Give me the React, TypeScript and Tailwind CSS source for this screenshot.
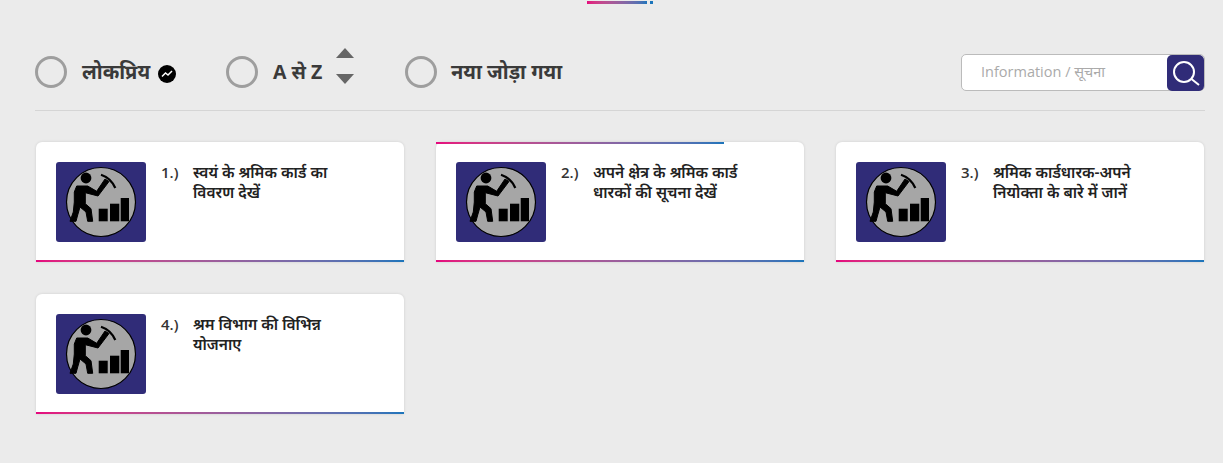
const cards = [
  { n: '1.)', lines: ['स्वयं के श्रमिक कार्ड का', 'विवरण देखें'], active: false },
  { n: '2.)', lines: ['अपने क्षेत्र के श्रमिक कार्ड', 'धारकों की सूचना देखें'], active: true },
  { n: '3.)', lines: ['श्रमिक कार्डधारक-अपने', 'नियोक्ता के बारे में जानें'], active: false },
  { n: '4.)', lines: ['श्रम विभाग की विभिन्न', 'योजनाए'], active: false },
]

// labour card logo
const WorkerIcon = () => (
  <svg viewBox="0 0 90 80" className="w-[90px] h-[80px] rounded-[3px] shrink-0 bg-[#302c78]">
    <circle cx="45" cy="40" r="34.5" fill="#a6a6a6" stroke="#000" strokeWidth="1.2" />
    <circle cx="30" cy="16" r="5.4" fill="#000" />
    <path d="M20.7 24 L31.7 24 L40.7 29.3 L49 17 L53 19.5 L42 34 L29.3 30.7 L29.3 41.7 L35 46.7 L36.7 59.3 L31.7 59.3 L30 50 L24 45 L21.7 53 L20 59.3 L14 59.3 L17.3 50 L18.3 40 L18.3 30 Z" fill="#000" stroke="#000" strokeWidth="1" strokeLinejoin="round" />
    <path d="M45 12.7 Q55 16 59.3 26" fill="none" stroke="#000" strokeWidth="2.2" />
    <rect x="42.7" y="46.7" width="9" height="12.6" fill="#000" />
    <rect x="54" y="41.7" width="9.3" height="17.6" fill="#000" />
    <rect x="64.7" y="36" width="8.3" height="23.3" fill="#000" />
  </svg>
)

const Radio = () => <span className="w-8 h-8 rounded-full border-[3px] border-[#9e9e9e] shrink-0" />

function Card({ n, lines, active }: { n: string; lines: string[]; active: boolean }) {
  return (
    <div className="relative h-[120px] bg-white rounded-t-[6px] shadow-[0_0_3px_rgba(0,0,0,0.12)] pt-5 px-5 flex">
      {active && <div className="absolute left-0 top-0 w-[288px] h-[2px] bg-gradient-to-r from-[#e5057d] to-[#1b75bb]" />}
      <WorkerIcon />
      <div className="ml-[15px] w-[32px] text-[15px] font-semibold text-[#333] leading-5">{n}</div>
      <div className="text-[15.5px] font-semibold text-[#222] leading-5">
        {lines.map(l => <div key={l}>{l}</div>)}
      </div>
      <div className="absolute left-0 bottom-0 w-full h-[2px] bg-gradient-to-r from-[#e5057d] to-[#1b75bb]" />
    </div>
  )
}

export default function App() {
  return (
    <div className="h-[463px] bg-[#ebebeb] overflow-hidden font-['Open_Sans','Noto_Sans',sans-serif]">
      <div className="flex justify-center gap-[3px] pl-[17px] pt-[1px] h-[4px]">
        <div className="w-[60px] h-[3px] bg-gradient-to-r from-[#e5057d] to-[#1b75bb]" />
        <div className="w-[3px] h-[3px] bg-[#1b75bb]" />
      </div>

      <div className="ml-[35px] mr-[18px] mt-[40px] h-[67px] border-b border-[#d5d5d5] flex items-start">
        <div className="flex items-center h-[56px] w-[191px]">
          <Radio />
          <span className="ml-[15px] text-xl font-bold text-[#3a3a3a]">लोकप्रिय</span>
          <span className="ml-[8px] mt-1 w-[18px] h-[18px] rounded-full bg-black text-white flex items-center justify-center">
            <svg viewBox="0 0 24 24" className="w-3 h-3" fill="none" stroke="currentColor" strokeWidth="3"><path d="M2 17 L9 10 L14 14 L22 6" /></svg>
          </span>
        </div>
        <div className="flex items-center h-[56px] w-[179px]">
          <Radio />
          <span className="ml-[15px] text-[19.5px] font-bold text-[#3a3a3a]">A से Z</span>
          <span className="ml-[14px] mb-[12px] flex flex-col gap-[16px]">
            <span className="w-0 h-0 border-x-[9px] border-x-transparent border-b-[10px] border-b-[#666]" />
            <span className="w-0 h-0 border-x-[9px] border-x-transparent border-t-[10px] border-t-[#666]" />
          </span>
        </div>
        <div className="flex items-center h-[56px]">
          <Radio />
          <span className="ml-[14px] text-xl font-bold text-[#3a3a3a]">नया जोड़ा गया</span>
        </div>
        <div className="ml-auto mt-[10px] w-[244px] h-[37px] bg-white border border-[#bbb] rounded-[5px] flex items-center justify-between">
          <span className="ml-[19px] mb-[2px] text-[14.5px] text-[#aaa]">Information / सूचना</span>
          <span className="w-[37px] h-[36px] bg-[#302c78] rounded-[5px] flex items-center justify-center text-white">
            <svg viewBox="0 0 36 36" className="w-9 h-9" fill="none" stroke="currentColor" strokeWidth="2">
              <circle cx="16" cy="17" r="10" />
              <path d="M23.5 24 L31 30" />
            </svg>
          </span>
        </div>
      </div>

      <div className="grid grid-cols-3 gap-8 mt-[31px] ml-[36px] mr-[19px]">
        {cards.map(c => <Card key={c.n} {...c} />)}
      </div>
    </div>
  )
}
